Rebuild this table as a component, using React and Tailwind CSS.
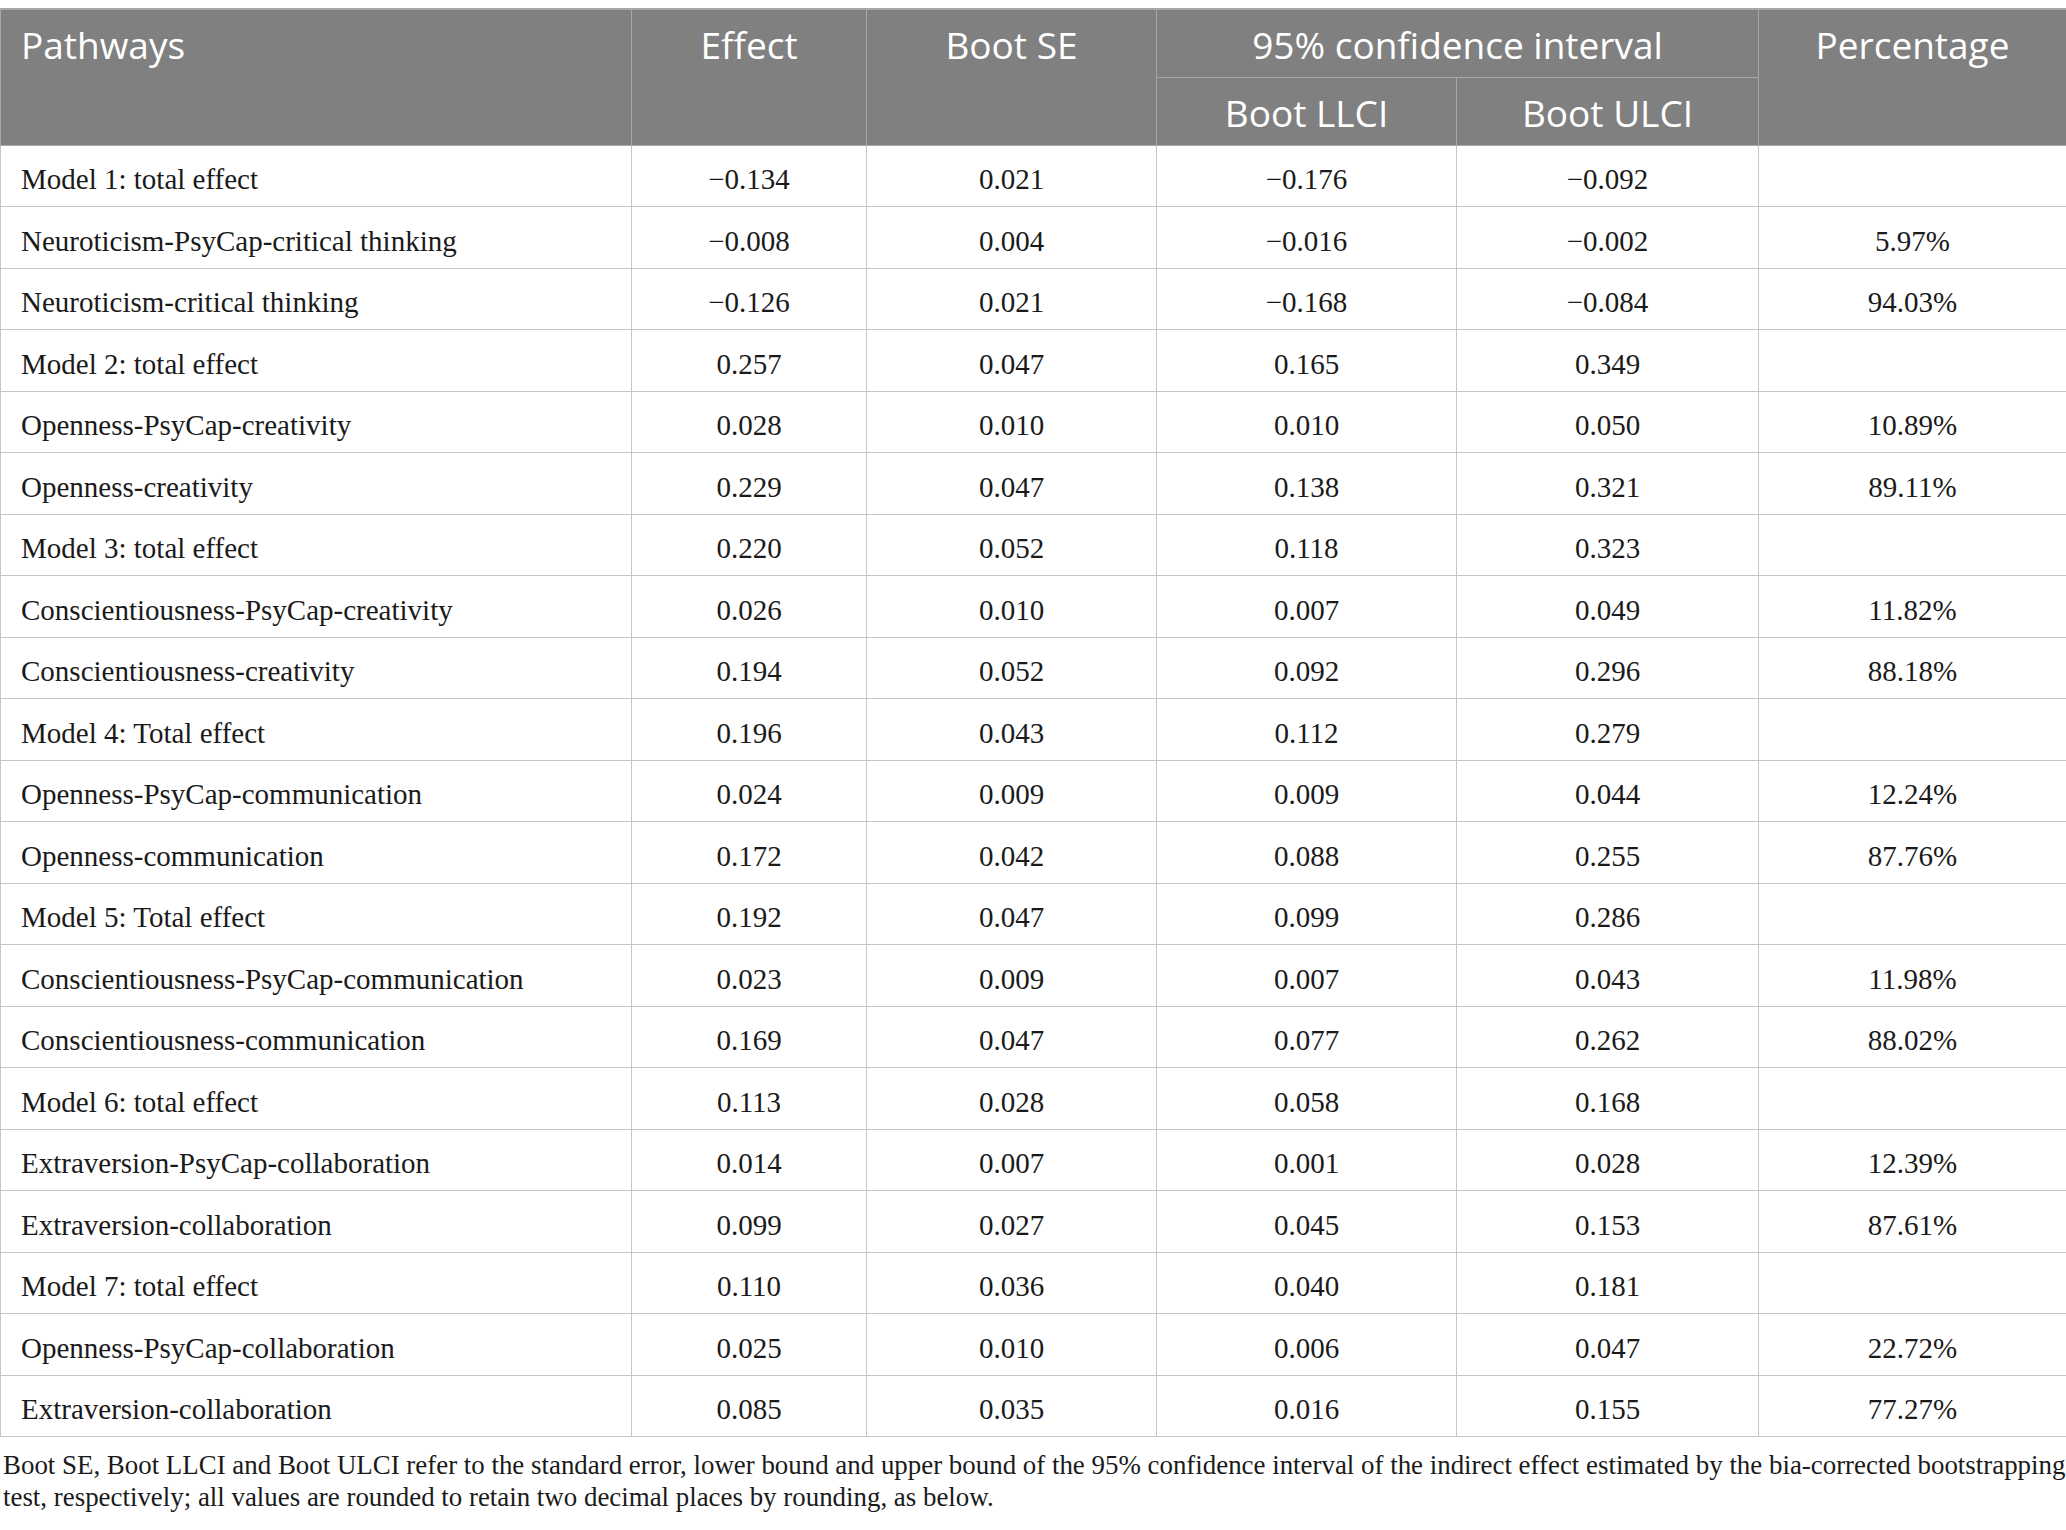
import React from "react";

const rows = [
  ["Model 1: total effect", "\u22120.134", "0.021", "\u22120.176", "\u22120.092", ""],
  ["Neuroticism-PsyCap-critical thinking", "\u22120.008", "0.004", "\u22120.016", "\u22120.002", "5.97%"],
  ["Neuroticism-critical thinking", "\u22120.126", "0.021", "\u22120.168", "\u22120.084", "94.03%"],
  ["Model 2: total effect", "0.257", "0.047", "0.165", "0.349", ""],
  ["Openness-PsyCap-creativity", "0.028", "0.010", "0.010", "0.050", "10.89%"],
  ["Openness-creativity", "0.229", "0.047", "0.138", "0.321", "89.11%"],
  ["Model 3: total effect", "0.220", "0.052", "0.118", "0.323", ""],
  ["Conscientiousness-PsyCap-creativity", "0.026", "0.010", "0.007", "0.049", "11.82%"],
  ["Conscientiousness-creativity", "0.194", "0.052", "0.092", "0.296", "88.18%"],
  ["Model 4: Total effect", "0.196", "0.043", "0.112", "0.279", ""],
  ["Openness-PsyCap-communication", "0.024", "0.009", "0.009", "0.044", "12.24%"],
  ["Openness-communication", "0.172", "0.042", "0.088", "0.255", "87.76%"],
  ["Model 5: Total effect", "0.192", "0.047", "0.099", "0.286", ""],
  ["Conscientiousness-PsyCap-communication", "0.023", "0.009", "0.007", "0.043", "11.98%"],
  ["Conscientiousness-communication", "0.169", "0.047", "0.077", "0.262", "88.02%"],
  ["Model 6: total effect", "0.113", "0.028", "0.058", "0.168", ""],
  ["Extraversion-PsyCap-collaboration", "0.014", "0.007", "0.001", "0.028", "12.39%"],
  ["Extraversion-collaboration", "0.099", "0.027", "0.045", "0.153", "87.61%"],
  ["Model 7: total effect", "0.110", "0.036", "0.040", "0.181", ""],
  ["Openness-PsyCap-collaboration", "0.025", "0.010", "0.006", "0.047", "22.72%"],
  ["Extraversion-collaboration", "0.085", "0.035", "0.016", "0.155", "77.27%"],
];

const th =
  "border border-[#a6a7a6] bg-[#7f807f] text-white font-normal text-[37px] leading-[40px] font-['Open_Sans',sans-serif]";
const td =
  "border border-[#c6c6c6] text-[29px] leading-[32px] text-[#1a1a1a] font-['Liberation_Serif','Times_New_Roman',serif] pt-[7px] pb-0";

export default function App() {
  return (
    <div className="w-[2066px] bg-white pt-[8px]">
      <table className="w-full table-fixed border-collapse">
        <colgroup>
          <col className="w-[631px]" />
          <col className="w-[235px]" />
          <col className="w-[290px]" />
          <col className="w-[300px]" />
          <col className="w-[302px]" />
          <col className="w-[308px]" />
        </colgroup>
        <thead>
          <tr className="h-[68px] border-t-2 border-t-[#a6a7a6]">
            <th rowSpan={2} className={`${th} text-left align-top pl-[20px] pt-[15px]`}>Pathways</th>
            <th rowSpan={2} className={`${th} text-center align-top pt-[15px]`}>Effect</th>
            <th rowSpan={2} className={`${th} text-center align-top pt-[15px]`}>Boot SE</th>
            <th colSpan={2} className={`${th} text-center align-middle pt-[4px]`}>95% confidence interval</th>
            <th rowSpan={2} className={`${th} text-center align-top pt-[15px]`}>Percentage</th>
          </tr>
          <tr className="h-[68px]">
            <th className={`${th} text-center align-middle pt-[4px]`}>Boot LLCI</th>
            <th className={`${th} text-center align-middle pt-[4px]`}>Boot ULCI</th>
          </tr>
        </thead>
        <tbody>
          {rows.map((r, i) => (
            <tr key={i} className="h-[61.5px]">
              <td className={`${td} text-left pl-[20px]`}>{r[0]}</td>
              {r.slice(1).map((c, j) => (
                <td key={j} className={`${td} text-center`}>{c}</td>
              ))}
            </tr>
          ))}
        </tbody>
      </table>
      <div className="mt-[12px] pl-[3px] text-[26.9px] leading-[32px] text-[#1a1a1a] font-['Liberation_Serif','Times_New_Roman',serif]">
        <div className="whitespace-nowrap">
          Boot SE, Boot LLCI and Boot ULCI refer to the standard error, lower bound and upper bound of the 95% confidence interval of the indirect effect estimated by the bia-corrected bootstrapping
        </div>
        <div className="whitespace-nowrap">
          test, respectively; all values are rounded to retain two decimal places by rounding, as below.
        </div>
      </div>
    </div>
  );
}
